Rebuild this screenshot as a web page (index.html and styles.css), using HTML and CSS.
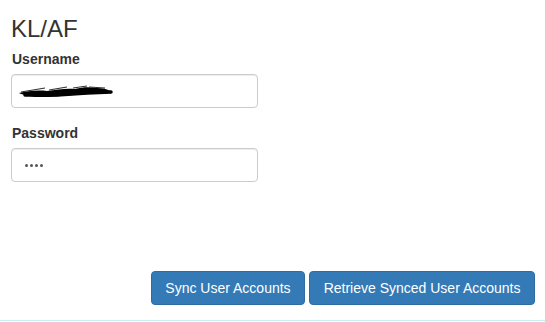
FILE: index.html
```html
<!DOCTYPE html>
<html>
<head>
<meta charset="utf-8">
<link rel="stylesheet" href="styles.css">
</head>
<body>
<div class="panel">
  <h3 class="title">KL/AF</h3>
  <div class="form-group">
    <label class="label">Username</label>
    <div class="input">
      <svg class="scribble" width="96" height="16" viewBox="0 0 96 16">
        <path d="M2 9 C10 7 20 6 30 7 C40 6 48 4 58 5 C66 3 72 3 80 4 C86 4 90 5 93 7 C88 9 80 10 72 10 C60 11 50 11 44 12 C36 13 26 13 18 13 C12 12 8 11 4 10 Z" fill="#000"/>
        <path d="M4 8 L28 4 M32 6 L50 3 M56 4 L70 2 M72 3 L88 4" stroke="#333" stroke-width="1.2" fill="none"/>
        <path d="M8 11 L40 11 L70 9 L94 8" stroke="#000" stroke-width="3.5" fill="none" stroke-linecap="round"/>
      </svg>
    </div>
  </div>
  <div class="form-group">
    <label class="label">Password</label>
    <div class="input"><span class="dots"><i></i><i></i><i></i><i></i></span></div>
  </div>
  <div class="spacer"></div>
  <div class="actions">
    <button class="btn">Sync User Accounts</button>
    <button class="btn">Retrieve Synced User Accounts</button>
  </div>
</div>
</body>
</html>
```
FILE: styles.css
```css
html, body {
  margin: 0;
  padding: 0;
  background: #fff;
}
body {
  font-family: "Liberation Sans", Arial, sans-serif;
  font-size: 14px;
  line-height: 20px;
  color: #333;
}
.panel {
  box-sizing: border-box;
  height: 321px;
  border-bottom: 1px solid #c3eef2;
  padding: 16px 10px 15px 11px;
  display: flex;
  flex-direction: column;
}
.title {
  margin: 0 0 7px 0;
  font-size: 24px;
  font-weight: 500;
  line-height: 26.4px;
  color: #333;
}
.form-group {
  margin-bottom: 15px;
}
.label {
  display: block;
  font-weight: bold;
  margin-bottom: 5px;
  padding-left: 1px;
}
.input {
  box-sizing: border-box;
  width: 247px;
  height: 34px;
  border: 1px solid #ccc;
  border-radius: 4px;
  padding: 0 12px 0 5px;
  display: flex;
  align-items: center;
  box-shadow: inset 0 1px 1px rgba(0,0,0,.075);
}
.scribble {
  display: block;
  margin-top: 2px;
}
.dots {
  display: flex;
  gap: 2px;
  margin-left: 8px;
}
.dots i {
  width: 3px;
  height: 3px;
  border-radius: 50%;
  background: #555;
}
.spacer {
  flex: 1;
}
.actions {
  display: flex;
  justify-content: flex-end;
  gap: 4px;
}
.btn {
  box-sizing: border-box;
  height: 34px;
  padding: 6px 13.5px;
  font-family: "Liberation Sans", Arial, sans-serif;
  font-size: 14px;
  line-height: 20px;
  color: #fff;
  background: #337ab7;
  border: 1px solid #2e6da4;
  border-radius: 4px;
}
```
